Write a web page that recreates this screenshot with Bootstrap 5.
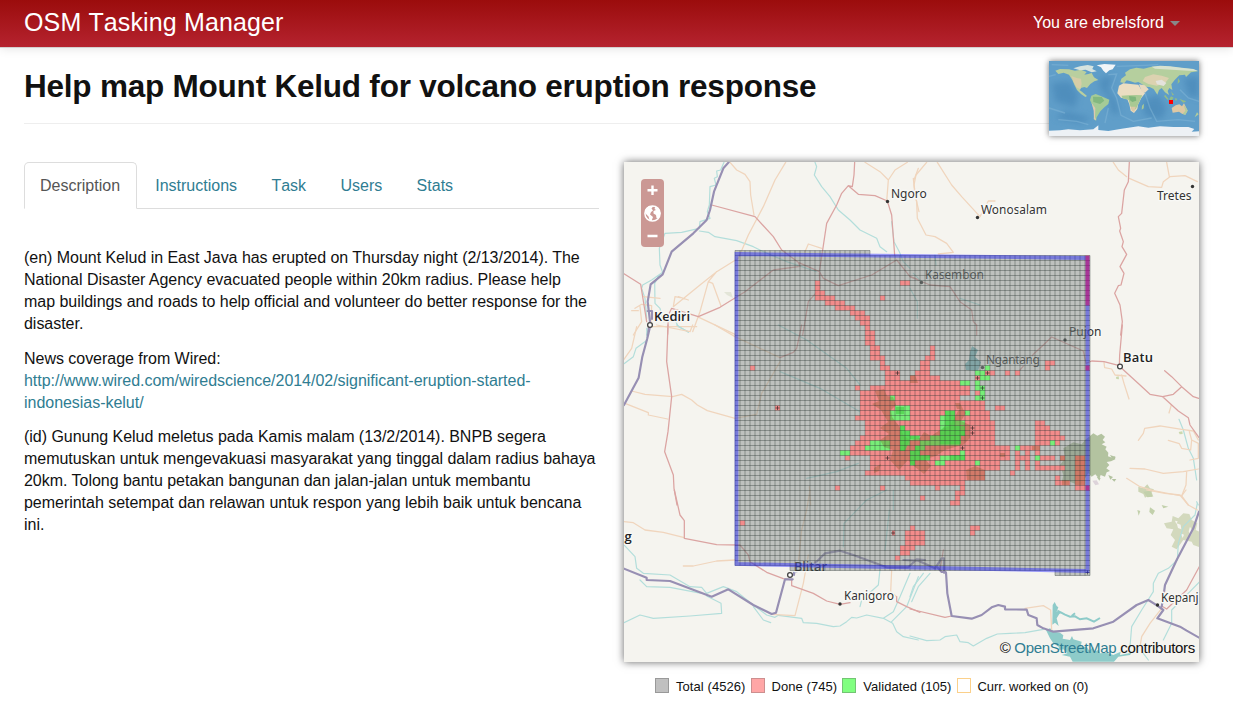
<!DOCTYPE html>
<html lang="en">
<head>
<meta charset="utf-8">
<meta name="viewport" content="width=device-width, initial-scale=1">
<title>OSM Tasking Manager</title>
<link href="https://cdn.jsdelivr.net/npm/bootstrap@5.3.0/dist/css/bootstrap.min.css" rel="stylesheet">
<style>
body{font-family:"Liberation Sans",Arial,sans-serif;font-size:16px;line-height:22px;color:#111;background:#fff;overflow:hidden}
a{color:#2f7d92;text-decoration:none}
.topbar{height:47px;background:linear-gradient(#9b0c0c,#b5232f);box-shadow:0 1px 0 #d4cfcf,0 1px 10px rgba(0,0,0,.13);padding:0 53px 0 24px}
.topbar .navbar-brand{font-size:25px;line-height:28px;color:#fff;padding:0;margin-top:-4px;font-kerning:none;letter-spacing:.13px}
.user-menu{color:#fff;margin-top:-2px;letter-spacing:.05px}
.user-menu::after{color:#888;border-top-width:5px;border-left-width:5px;border-right-width:5px;margin-left:6px;vertical-align:2px}
.page{padding:0 34px 0 24px}
.page-title{height:77px;border-bottom:1px solid #eee}
.page-title h1{font-size:31.5px;line-height:40px;font-weight:700;margin:19px 0 0;letter-spacing:-.22px}
.world{width:150px;height:75px;margin-top:14px;box-shadow:0 0 6px rgba(0,0,0,.55);position:relative;flex:none}
.columns{display:grid;grid-template-columns:575px 575px;gap:25px;margin-top:38px}
.nav-tabs{height:47px;border-bottom-color:#ddd;gap:2px;font-kerning:none}
.nav-tabs .nav-link{color:#2f7d92;padding:12px 15.2px 11px;line-height:22px;border-radius:5px 5px 0 0;height:47px}
.nav-tabs .nav-link.active{color:#555;border-color:#ddd #ddd #fff;padding-left:15px;padding-right:16px}
.description{margin-top:38px;letter-spacing:-.03px;white-space:nowrap}
.description p{margin-bottom:12.5px}
.map-box{height:500px;box-shadow:0 0 8px rgba(0,0,0,.6);background:#f5f4ef}
.zoom-ctl{left:17px;top:17px;width:23px;height:68px;background:#cb9894;border-radius:4px}
.attribution{right:4px;bottom:3px;font-size:15px;letter-spacing:-.3px}
.legend{font-size:13px;line-height:18px;padding-left:31px;margin-top:16px;letter-spacing:.07px}
.legend .me-1{margin-right:5px!important}
.legend span:last-child{letter-spacing:-.03px}
.swatch{width:14px;height:15px;border:1px solid #999;margin-right:7px;margin-top:-4px}
.total{background:#c0c0c0}.done{background:#ffa6a6;border-color:#cc8f8f}.valid{background:#80ff80;border-color:#73c473}.current{background:#fff;border-color:#fbd08a}
svg{display:block}
.line path{fill:none;stroke-linejoin:round;stroke-linecap:round}
.line .riv{stroke:#b3dedb;stroke-width:3.6}
.line .trk{stroke:#978fb3;stroke-width:6.5}
.line .pri{stroke:#dba4a2;stroke-width:3.8}
.line .sec{stroke:#f0d5bd;stroke-width:3.8}
.place{font-family:"Noto Sans","Open Sans",sans-serif;font-size:12px;fill:#333;stroke:#f8f8f5;stroke-width:3px;stroke-linejoin:round;paint-order:stroke}
.city{font-family:"Open Sans","Noto Sans",sans-serif;font-weight:600;font-size:13px;fill:#222}
</style>
</head>
<body>
<nav class="topbar d-flex justify-content-between align-items-center">
  <a class="navbar-brand" href="#">OSM Tasking Manager</a>
  <a class="user-menu dropdown-toggle" href="#">You are ebrelsford</a>
</nav>
<main class="page">
  <header class="page-title d-flex justify-content-between align-items-start">
    <h1>Help map Mount Kelud for volcano eruption response</h1>
    <div class="world">
      <svg width="150" height="75" viewBox="12 9 450 225">
        <defs><filter id="soft"><feGaussianBlur stdDeviation="1.9"/></filter><filter id="deep"><feGaussianBlur stdDeviation="9"/></filter></defs>
        <rect x="12" y="9" width="450" height="225" fill="#609ec9"/>
        <g filter="url(#deep)" fill="#4484b5" opacity=".6"><path d="M20 75L75 70L100 110L90 150L30 130ZM165 60L205 55L190 95L215 130L225 170L200 165L190 120L165 90ZM290 130L340 110L365 150L350 185L300 175ZM415 60L462 55V120L430 115ZM60 160L140 180L110 195L30 180Z"/></g>
        <g fill="none" stroke="#83b7d8" stroke-width="4" opacity=".5" filter="url(#soft)"><path d="M12 55L32 50M110 60L140 70M190 50L215 48L200 90L215 120L228 172L265 190L320 180M130 200L95 190L40 185M300 105L315 150L335 190L400 185L450 190M405 95L430 120L462 130M12 150L60 165M190 150L180 195M215 25L300 22L340 20M20 20L70 22"/></g>
        <g filter="url(#soft)">
          <path fill="#b9cf9f" d="M31 38L45 33L72 34L90 38L108 35L125 42L118 50L130 48L140 45L147 58L160 66L148 70L136 78L126 90L118 87L108 90L104 97L111 101L119 108L126 114L121 117L108 108L96 96L88 80L82 66L72 50L56 44L40 48Z"/>
          <path fill="#d7cda7" d="M79 54L95 60L108 62L110 78L106 94L94 88L86 72Z"/>
          <path fill="#d6e3df" d="M85 31L105 25L128 21L146 25L142 33L155 40L140 43L122 35L105 37Z"/>
          <path fill="#f1f5f8" d="M155 22L178 18L212 20L203 34L193 37L183 46L175 38L168 28Z"/>
          <path fill="#a5cb97" d="M139 113L152 108L169 115L193 125L190 138L178 148L166 160L155 178L153 188L146 183L149 160L142 142L135 126Z"/>
          <path fill="#dcc9b1" d="M140 135L151 150L150 178L154 187L147 184L146 158Z"/><path fill="#83b880" d="M144 116L170 117L178 128L165 138L145 132Z"/>
          <path fill="#b5cf9e" d="M229 62L243 52L240 44L255 34L274 29L296 32L320 26L345 24L375 26L410 30L445 34L459 40L438 43L423 57L420 50L403 52L389 66L379 79L382 96L373 90L368 99L372 111L360 103L350 90L342 96L337 110L326 93L314 87L302 86L290 78L280 72L270 74L257 70L245 67L238 75L226 73Z"/>
          <path fill="#dcd2b0" d="M300 57L325 49L350 53L372 60L360 76L335 83L310 78L293 69Z"/><path fill="#e4e2dc" d="M332 69L350 65L364 75L356 84L336 79Z"/>
          <path fill="#d8e2cf" d="M320 26L345 23L375 25L410 29L445 33L459 39L430 38L380 35L330 32Z"/>
          <path fill="#ebddc2" d="M222 83L235 76L257 78L280 80L288 94L300 106L289 120L279 140L277 153L267 165L257 158L253 139L247 124L228 119L217 106Z"/>
          <path fill="#a9c993" d="M229 113L250 112L274 111L292 112L287 122L279 140L273 153L263 159L256 145L251 126L233 121Z"/>
          <path fill="#7fb57c" d="M252 114L272 116L274 128L262 132L254 126Z"/><path fill="#dcc9a5" d="M258 146L272 146L268 162L260 158Z"/>
          <path fill="#e8d8bf" d="M282 79L299 82L311 94L300 104L290 101Z"/>
          <path fill="#a8c896" d="M291 143L297 137L296 151L290 155Z"/>
          <path fill="#94bd85" d="M361 111L371 124L367 125L357 114ZM378 115L386 119L379 128L373 123ZM389 121L397 122L393 130ZM403 123L424 130L415 134ZM378 100L387 111L382 112ZM399 60L405 70L398 78Z"/>
          <path fill="#dec8a4" d="M380 150L392 142L403 139L411 145L417 136L423 148L428 158L421 170L411 167L402 161L383 164Z"/>
          <path fill="#b2cd9c" d="M416 140L428 157L421 170L413 168L421 158ZM456 163L461 169L449 178Z"/>
          <path fill="#edf1f5" d="M12 218L45 217L70 214L105 217L145 214L160 202L160 216L190 219L230 212L280 205L310 209L345 205L385 207L430 207L448 213L440 221L462 220V240H12Z"/>
        </g>
        <rect x="372" y="126" width="12" height="12" fill="#f00"/>
      </svg>
    </div>
  </header>
  <div class="columns">
    <section>
      <ul class="nav nav-tabs">
        <li class="nav-item"><a class="nav-link active" href="#">Description</a></li>
        <li class="nav-item"><a class="nav-link" href="#">Instructions</a></li>
        <li class="nav-item"><a class="nav-link" href="#">Task</a></li>
        <li class="nav-item"><a class="nav-link" href="#">Users</a></li>
        <li class="nav-item"><a class="nav-link" href="#">Stats</a></li>
      </ul>
      <div class="description">
        <p>(en) Mount Kelud in East Java has erupted on Thursday night (2/13/2014). The<br>National Disaster Agency evacuated people within 20km radius. Please help<br>map buildings and roads to help official and volunteer do better response for the<br>disaster.</p>
        <p>News coverage from Wired:<br><a href="#">http://www.wired.com/wiredscience/2014/02/significant-eruption-started-<br>indonesias-kelut/</a></p>
        <p>(id) Gunung Kelud meletus pada Kamis malam (13/2/2014). BNPB segera<br>memutuskan untuk mengevakuasi masyarakat yang tinggal dalam radius bahaya<br>20km. Tolong bantu petakan bangunan dan jalan-jalan untuk membantu<br>pemerintah setempat dan relawan untuk respon yang lebih baik untuk bencana<br>ini.</p>
      </div>
    </section>
    <section>
      <div class="map-box position-relative">
        <svg width="575" height="500" viewBox="624 162 575 500">
          <!-- woods and lakes -->
          <g transform="translate(980 325) scale(.33333)" fill="#b3c3a0">
            <path d="M330 333L340 325L352 332L364 326L375 335L368 345L376 352L365 358L380 365L376 373L385 383L384 394L397 398L404 394L406 403L393 409L380 411L388 420L379 430L390 438L380 442L375 455L362 450L358 462L346 448L335 455L325 445L300 482L270 470L245 475L250 450L240 420L255 400L250 370L280 352L305 358L315 345Z"/>
            <path d="M390 390l18 6-10 8zM385 450l14 6-8 8zM395 462l14 0-6 8zM350 455l12 4-4 8z"/>
            <path fill="#cdd5b5" d="M475 485L490 490L502 478L510 490L522 493L515 502L520 515L505 512L495 518L490 507L475 500Z"/>
            <path fill="#cbd8ae" d="M408 156L416 154L417 163L409 162ZM596 321L607 319L608 327L599 328Z"/><path fill="#ddd3da" d="M337 467L350 466L357 478L346 481Z"/>
          </g>
          <g transform="translate(910 490) scale(.33333)">
            <path fill="#d3d9bd" d="M762 100L785 95L788 78L805 85L820 70L838 72L845 90L862 100L857 120L869 125V172L850 165L845 155L820 150L800 178L785 170L795 150L782 135L790 118L770 115Z"/>
            <path fill="#f5f4ef" d="M800 100l12 4 2 14-10-4zM840 110l8 14-6 14-6-14zM812 130l10 4-4 10zM795 92l8 2-4 8z"/>
            <path fill="#c2d0ab" d="M700 5L722 2L727 20L712 22ZM720 52L735 62L728 75L718 66ZM682 60L691 63L686 77ZM755 45L775 50L760 55Z"/>
            <path fill="#8ecbc9" d="M408 420L420 415L434 425L450 428L460 436L458 446L480 450L486 438L490 448L505 452L515 455L512 470L530 470L538 482L550 470L552 485L565 480L570 490L590 488L610 495L632 485L630 495L665 488L660 495L625 500L612 515H488L480 500L455 495L472 490L460 478L448 480L446 470L430 460L420 445Z"/>
            <path fill="#8ecbc9" d="M434 336L440 348L445 352L440 365L458 366L448 372L440 385L446 408L435 398L427 404L428 345Z"/><path fill="none" stroke="#8ecbc9" stroke-width="6" d="M442 362L465 374L480 380L495 379L510 388L530 385L552 395L570 384M485 378L495 370"/>
          </g>
          <path fill="#7fb9bd" d="M972 346L978 350L975 357L981 362L978 371L966 370L965 364L969 360L970 352Z"/>
          <path fill="#e3e5d8" d="M724 292L731 292L733 298L727 295Z"/>
          <!-- roads and rivers -->
          <g class="line" transform="translate(620 155) scale(.33333)">
            <path class="riv" d="M312 22L302 45L290 48L292 65L283 70L288 90L270 95L268 150L262 170L270 190L240 200L238 220L185 232L135 235L118 280L120 330L128 352L95 375L68 390L65 400L75 430L80 490M238 228L265 232L285 245L350 257L400 275L430 290L500 320L590 350M585 22L590 35L583 60L605 95L630 125L655 165L690 195L720 225L770 250L780 275L800 290M815 200L822 260L838 290L850 320L870 340M104 380L105 445L120 460L130 500L165 495L175 515L205 530M118 360L104 385"/>
            <path class="sec" d="M330 22L350 45L375 58L390 80L392 120L402 180M497 22L465 75L430 155L385 240L355 310L290 350L240 390L160 455M290 350L265 380L278 385L303 453M265 380L240 470L218 530M735 22L780 50L805 75L800 140M805 75L825 45L862 22M880 70L885 120L897 170M895 40L882 75M605 280L565 267L555 290M175 425L205 435M70 425L120 430M45 460L65 448L95 452L92 515M35 467H55M160 455L165 425L180 428M232 485L345 538M60 455L65 500L40 540M95 515H230"/>
            <path class="pri" d="M704 22L702 60L697 95L685 92L665 115L650 150L620 205L608 285L598 350M685 92L715 118L765 122L802 138L815 180L824 300M275 150L405 185L460 245L485 285L535 322L598 350L610 370L655 392L755 360L830 315L870 365L900 375M12 356L62 388L72 450L80 500M143 538L145 480L155 460L235 485L300 457L375 410L460 345L535 335M598 355L600 400L565 440L548 540M535 322L540 335"/>
            <path class="trk" d="M326 22L310 40L282 110L270 165L260 195L220 235L155 290L128 358L92 388L83 440L90 500L82 540M83 468H96V492"/>
          </g>
          <g class="line" transform="translate(910 155) scale(.33333)">
            <path class="sec" d="M50 22L18 60L12 90L20 140L22 190L48 240L75 245L110 265L130 292L85 297M82 22L125 90L155 125L210 185L235 138H255M610 22L625 45L650 65M658 70L715 95L755 97L760 80L780 65L825 62L862 80M770 22L778 65"/>
            <path class="pri" d="M658 22L655 80L643 105L635 175L625 185L632 220L629 228L640 260L636 275L650 298L630 335L642 355L633 390L625 392L614 415L630 450L637 500L632 540M0 365L60 390L120 395L150 440L185 465L190 500L200 510V540"/>
            <path class="riv" d="M0 400L22 440V490M75 300L78 330M150 430L210 450M10 355L35 380"/>
          </g>
          <g class="line" transform="translate(620 325) scale(.33333)">
            <path class="riv" d="M80 10L82 45L48 70L40 95L12 116M170 0L205 22M475 0L560 45L680 130L720 180M480 140L600 190L720 260M715 415L650 440L560 460"/>
            <path class="sec" d="M50 5L35 70L12 103M285 0L345 35L480 98M480 110L425 205L410 268L345 280L262 257L232 240L215 225L185 208L158 215L75 208L35 198M15 235L85 263V270L143 282M110 0L210 20L218 0M568 485L572 540"/>
            <path class="pri" d="M144 0L140 110L155 215L144 320L134 380L160 450L162 490L171 540M545 0L530 70L520 82L480 98"/>
            <path class="trk" d="M90 5L82 40L67 95L56 158L12 240"/>
          </g>
          <g class="line" transform="translate(980 325) scale(.33333)">
            <path class="riv" d="M597 283L610 315L625 370L640 400L650 465M655 540L650 530"/>
            <path class="sec" d="M372 112L374 128L395 132L405 150L438 153M425 150L432 175L447 222M475 346L490 325L494 310L540 303L605 313L640 318L655 345M565 346L598 356L605 370L632 375L635 345L628 320M635 345L655 355V400L630 405M450 430L495 432L550 445L610 440L655 432M440 460L480 485L520 497L605 513L625 540M620 440L618 480L605 513M574 240L567 264"/>
            <path class="pri" d="M427 0L419 90L418 122L372 110L335 108L318 115L310 78L215 36L190 60L160 88L120 135M420 125L480 180L510 208L548 215L580 208L605 185L575 155L554 137M605 185L640 215L656 220M548 215L595 258L625 278L630 300L657 338"/>
          </g>
          <g class="line" transform="translate(620 490) scale(.33333)">
            <path class="riv" d="M12 165L45 200L50 235L70 250L150 255L210 290L245 292L260 310L310 290L350 305L400 345L440 375L465 382L475 376L545 385L550 398L590 400L640 410L660 408L680 395L695 382L710 384L740 375L790 385L818 400L830 425L850 440L895 450M60 270L80 290L150 292L245 310M12 398L60 375L100 385L210 378L305 370L303 340L260 318M400 350L430 390L452 398M780 238L775 285L725 330L720 350M870 250L840 320L820 365L790 385M895 260L860 350L815 395M670 170L672 100L740 30L800 0M808 60L795 180M820 0V60"/>
            <path class="sec" d="M12 95L40 98L75 120L130 127L193 143M190 228L220 228L290 213L345 210M565 195L550 280L525 377L455 373M815 240L812 305L830 320M570 0L560 60L545 120L535 220"/>
            <path class="pri" d="M163 0L180 75L193 92V145L290 164L360 165L385 195L390 215L440 247L490 266L515 270V287L580 310L620 333L660 343L690 338M830 320V335L860 350L900 367"/>
            <path class="trk" d="M12 236L80 263V270L150 273L275 320L325 298L400 345L455 372L468 368L495 268H518M522 255V248L590 215L615 190L660 182L700 195L800 232L865 232L890 208L915 210"/>
          </g>
          <g class="line" transform="translate(910 490) scale(.33333)">
            <path class="riv" d="M0 438L50 452L90 450L105 440L140 435L150 455L175 458L190 468L230 445L262 432L300 430L345 428L400 418M862 40L855 75L820 110L805 160L802 210L775 235L745 250L730 280V305L695 360L665 410L660 470M869 275L825 320L785 360V400L760 450M700 490L715 510M40 250L10 290L0 320M60 250L25 290L5 335"/>
            <path class="sec" d="M345 355L400 347L422 360L425 420M710 0L765 10L810 15L835 45L862 60M755 355L720 400L695 440L690 470M828 0L815 18"/>
            <path class="pri" d="M0 357L105 382L125 378M869 228L830 300L770 357L755 348M100 180L90 240"/>
            <path class="trk" d="M-20 210L25 212L75 235L95 205H102V248H108L112 310L125 378L185 386L215 375L245 352L265 345L285 350V358L350 359L355 375L380 385L382 405L400 415L430 425L550 415L610 395L680 345L715 330L742 347L760 360L742 385L810 410L830 422L869 444M867 65L850 115L800 210L765 285L760 322L755 350M82 232L95 246H107"/>
            <path fill="#978fb3" d="M383 385L391 410H373Z"/>
          </g>
          <!-- places -->
          <g class="place">
            <text x="891" y="198">Ngoro</text><text x="981" y="214" textLength="66">Wonosalam</text><text x="1157" y="200">Tretes</text>
            <text x="925" y="279" textLength="59">Kasembon</text><text x="1069" y="336">Pujon</text><text x="986" y="364" textLength="54">Ngantang</text>
            <text x="844" y="600" textLength="50">Kanigoro</text><text x="1161" y="602" textLength="37.500">Kepanj</text>
            <text class="city" x="654" y="321" textLength="36">Kediri</text><text class="city" x="1123" y="362" textLength="30">Batu</text><text class="city" x="794" y="571" textLength="33">Blitar</text><text class="city" x="624.500" y="541">g</text>
          </g>
          <g fill="#333"><circle cx="887.500" cy="201.500" r="1.700"/><circle cx="977.500" cy="217.500" r="1.700"/><circle cx="1192.500" cy="186.500" r="1.700"/><circle cx="921.500" cy="282.500" r="1.700"/><circle cx="1065" cy="340" r="1.700"/><circle cx="982.500" cy="367.500" r="1.700"/><circle cx="840" cy="604" r="1.700"/><circle cx="1157.500" cy="605" r="1.700"/></g>
          <g fill="#fff" stroke="#444" stroke-width="1.300"><circle cx="650" cy="325" r="2.400"/><circle cx="1120" cy="366.500" r="2.400"/><circle cx="790" cy="575" r="2.400"/></g>
          <g id="tiles"></g>
          <path d="M736.500 254L1087.500 258V571L736.500 564Z" fill="none" stroke="#1818ff" stroke-opacity=".42" stroke-width="3.800"/>
          <path d="M1085.500 255.500h4v50h-4zM1085.500 365.500h4v5h-4zM1085.500 485.500h4v5h-4z" fill="#d00060" fill-opacity=".55"/>
        </svg>
        <div class="zoom-ctl position-absolute">
          <svg width="23" height="68" viewBox="0 0 23 68">
            <path d="M11.500 6.500v9.500M6.500 11.200h10M6.500 57h10" stroke="#fff" stroke-width="2.400"/>
            <circle cx="11.500" cy="34.500" r="7.600" fill="none" stroke="#fff" stroke-width="1.500"/>
            <path fill="#fff" d="M4.500 30L8 27L12.500 27L10.500 29.500L12 31.500L10 33L9 35.500L12 38L10.500 42L8.500 41L7.500 37.500L4 34ZM13.500 30L14.500 27.500L18 30L19.500 34L18 39L15.500 39L15 36L12.500 34.500L12.500 32L15 31Z"/>
          </svg>
        </div>
        <div class="attribution position-absolute">© <a href="#">OpenStreetMap</a> contributors</div>
      </div>
      <div class="legend d-flex align-items-center">
        <span class="swatch total"></span><span class="me-1">Total (4526)</span>
        <span class="swatch done"></span><span class="me-1">Done (745)</span>
        <span class="swatch valid"></span><span class="me-1">Validated (105)</span>
        <span class="swatch current"></span><span>Curr. worked on (0)</span>
      </div>
    </section>
  </div>
</main>
<script>
// Tile runs, "row:from-to,from-to"; 5px tiles counted from (800, 325.5)
const done = `-9:3-4,20-22 -8:3-4 -7:3-5 -6:3-7,16-17 -5:5-9 -4:7-11 -3:10-13 -2:11-14 -1:12-14 0:13-14 1:13-15 2:13-15 3:13-15
4:14-16,26-27 5:14-16,26-27 6:14-17,25-27 7:16-17,24-26,49-51 8:-10--9,16-18,24-26,49-50 9:17-20,23-26,37-39,41-42,43-44 10:17-20,22-28,35-36
11:17-32 12:11-12,14-34 13:12-34,35-36 14:12-32 15:12-37 16:-5--4,12-37,39-41 17:12-38 18:11-38 19:13-39,47-49 20:13-39,47-50 21:13-39,47-52
22:12-39,47-53 23:11-39,47-50,51-52 24:10-42,44-48 25:10-42,43-44,45-46,47-48 26:9-10,14-42,43-46,48-51,52-53,55-57 27:14-40,43-44,45-46,47-48,55-57
28:14-40,43-44,45-46,47-53,55-57 29:13-37,42-43,55-57 30:21-37,51-52,55-57 31:22-33,51-54,55-57 32:7-8,16-17,27-28,32-33,55-57 33:31-33
34:24-25,31-32 35:30-32 39:-12--11 40:22-23,34-36 41:18.4-19,21-25,34-35 42:21-25 43:21-25 44:20-23 45:20-22 46:19-20`;
const valid = `8:37-38 9:35-37 10:36-38 11:32-34,35-36 12:35-37 13:36-37 14:18-19,35-37 16:19-22 17:18-22,29-31,33-34 18:18-22,28-31 19:28-33 20:20-21,28-32
21:20-22,28-33 22:20-24,26-32 23:14-18,20-22,24-32,50-51 24:13-18,20-21,23-25,43-44 25:8-10,22-24,32-33 26:22-26,28-33,47-48 27:22-23,27-29,35-36`;
const runs = s => s.trim().split(/\s+/).map(r => {
  const [row, list] = r.split(':');
  return list.split(',').map(p => {
    const [, a, b] = p.match(/^(-?[\d.]+)-(-?[\d.]+)$/);
    return `M${800 + a * 5} ${325.5 + row * 5}H${800 + b * 5}v5H${800 + a * 5}z`;
  }).join('');
}).join('');
let grid = '';
for (let x = 735; x <= 1090; x += 5) grid += `M${x} ${x <= 870 ? 250.5 : 255.5}V${x >= 1055 ? 575.5 : x < 790 ? 565.5 : 570.5}`;
for (let y = 250.5; y <= 576; y += 5) grid += `M${y > 571 ? 1055 : y > 566 ? 790 : 735} ${y}H${y < 251 ? 870 : 1090}`;
const cross = [[777.5,408],[897.5,373],[977.5,378],[987.5,373],[982.5,388],[982.5,398],[972.5,428],[972.5,433],[962.5,448],[887.5,458],[893,533],[1087.5,572.5]]
  .map(([x, y]) => `M${x - 2} ${y}h4M${x} ${y - 2}v4`).join('');
const scar = `M875 391L884 389L887 396L893 397L896 405L891 410L892 417L899 426L904 436L910 440L920 438L924 432L931 436L940 430L950 426L958 411L962 408L966 413L961 421L970 425L970 438L963 445L955 447L945 450L936 456L925 459L931 466L924 474L915 467L908 460L899 470L890 460L893 450L884 447L880 440L889 434L880 428L888 422L881 410L872 404L879 401Z
M955 403h5l3 6h-6zM966 470L975 466L985 470V480H967ZM910 375h5l3 8h-8zM874 468l7-4-2 7-5 2zM1032 446h8v4h-8zM1060 456h5v5h-5zM1062 480h7v5h-7zM1075 456h10v29h-10zM1000 453h5v4h-5z`;
document.getElementById('tiles').innerHTML = `
<path fill="#848c8a" fill-opacity=".49" d="M735 250.500H870V255.500H1090V575.500H1055V570.500H790V565.500H735Z"/>
<path fill="#fa8484" fill-opacity=".88" d="${runs(done)}"/>
<path fill="#78ee78" d="${runs(valid)}"/>
<path fill="#7a4a10" fill-opacity=".27" d="${scar}"/>
<path fill="#4fd24c" fill-opacity=".75" d="M945 411h10v15h10v10h-4v8h-21v-13l5-5zM900 426h5v5h5v5h9v3h-9l-5 12h-5zM910 451h5v-5h5v9h10v5h-15v5h-5zM950 455h15v5h-15zM896 407h8v7h-8z"/>
<path fill="none" stroke="#26332f" stroke-opacity=".36" stroke-width="1" d="${grid}"/>
<path fill="none" stroke="#111" stroke-opacity=".6" stroke-width=".9" d="${cross}"/>`;
</script>
<script src="https://cdn.jsdelivr.net/npm/bootstrap@5.3.0/dist/js/bootstrap.bundle.min.js"></script>
</body>
</html>
